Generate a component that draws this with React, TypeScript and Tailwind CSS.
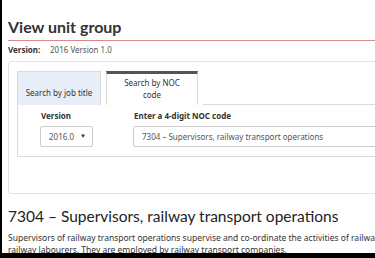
import React from 'react';

const heading = { fontFamily: 'Lato, "Liberation Sans", sans-serif' };
const body = { fontFamily: '"Noto Sans", "Open Sans", "Liberation Sans", sans-serif' };

const App: React.FC = () => {
  return (
    <div className="w-[375px] h-[258px] overflow-hidden bg-black pl-[2px] pb-[5px]">
      <div className="h-full bg-white overflow-hidden pl-[6px] text-[#333]" style={body}>
        {/* Page title */}
        <h1
          className="pt-[18px] pb-[4px] text-[16px] leading-[18px] font-bold text-[#333] border-b border-[#d98a8c]"
          style={heading}
        >
          View unit group
        </h1>

        <div className="mt-[3px] flex text-[8px] leading-[11px]">
          <span className="font-bold w-[42px]">Version:</span>
          <span className="text-[#555]">2016 Version 1.0</span>
        </div>

        {/* Search card */}
        <div className="mt-[6px] w-[420px] h-[133px] border border-[#e3e3e3] rounded-[3px] pt-[9px] pl-[8px]">
          <div className="flex items-stretch gap-[5px] h-[34px]">
            <div className="w-[84px] bg-[#e8eef8] border border-b-0 border-[#dcdcdc] flex items-end justify-center pb-[7px] text-[8px] leading-[11px] text-[#333]">
              Search by job title
            </div>
            <div className="w-[92px] bg-white border-t-[3px] border-t-[#555] border-x border-x-[#dcdcdc] text-center text-[8px] leading-[12px] text-[#333] pt-[3px]">
              Search by NOC
              <br />
              code
            </div>
            <div className="flex-1 border-b border-[#dcdcdc]" />
          </div>

          {/* Tab panel */}
          <div className="h-[53px] border border-t-0 border-[#dcdcdc] border-r-0 -mt-px pt-[8px] flex">
            <div className="w-[84px] -mt-[2px] flex flex-col items-start pl-[22px]">
              <div className="text-[8px] leading-[12px] font-bold pl-[1px]">Version</div>
              <div className="mt-[4px] w-[53px] h-[21px] border border-[#ccc] rounded-[2px] flex items-center justify-between pl-[8px] pr-[6px] text-[8px] text-[#555]">
                <span>2016.0</span>
                <span className="text-[6px] text-[#333]">▼</span>
              </div>
            </div>
            <div className="ml-[31px] -mt-[2px] flex-1 flex flex-col">
              <div className="text-[8px] leading-[12px] font-bold pl-[1px]">Enter a 4-digit NOC code</div>
              <div className="mt-[4px] h-[21px] border border-[#ccc] rounded-[2px] flex items-center pl-[8px] text-[8px] text-[#555]">
                7304 – Supervisors, railway transport operations
              </div>
            </div>
          </div>
        </div>

        {/* Unit group heading */}
        <h2 className="mt-[12px] text-[15.5px] leading-[20px] text-[#222] whitespace-nowrap" style={heading}>
          7304 – Supervisors, railway transport operations
        </h2>
        <p className="mt-[6px] text-[8.5px] leading-[12px] text-[#333] whitespace-nowrap">
          Supervisors of railway transport operations supervise and co-ordinate the activities of railway transport workers and
          <br />
          railway labourers. They are employed by railway transport companies.
        </p>
      </div>
    </div>
  );
};

export default App;
